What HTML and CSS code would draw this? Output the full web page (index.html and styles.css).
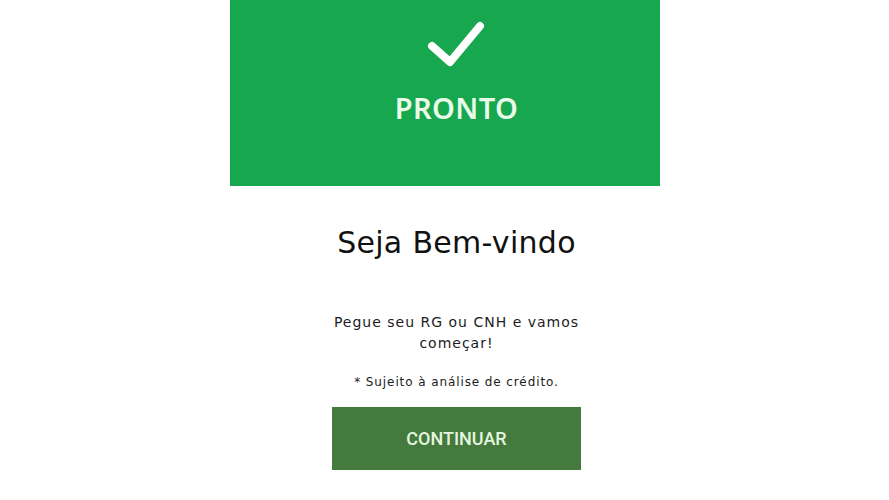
FILE: index.html
```html
<!DOCTYPE html>
<html lang="pt-BR">
<head>
<meta charset="utf-8">
<link rel="stylesheet" href="styles.css">
</head>
<body>
<div class="page">
  <div class="banner">
    <svg class="check" width="60" height="52" viewBox="0 0 60 52">
      <path d="M5 28 L23 44 L53 8" fill="none" stroke="#fff" stroke-width="8" stroke-linecap="round" stroke-linejoin="round"/>
    </svg>
    <div class="status">PRONTO</div>
  </div>
  <div class="content">
    <h1 class="title">Seja Bem-vindo</h1>
    <p class="lead">Pegue seu RG ou CNH e vamos começar!</p>
    <p class="note">* Sujeito à análise de crédito.</p>
    <button class="btn">CONTINUAR</button>
  </div>
</div>
</body>
</html>
```
FILE: styles.css
```css
html, body {
  margin: 0;
  padding: 0;
  background: #fff;
}
.page {
  width: 430px;
  margin: 0 auto;
  font-family: "DejaVu Sans", Verdana, sans-serif;
}
.banner {
  height: 186px;
  background: #17a74e;
  display: flex;
  flex-direction: column;
  align-items: center;
  box-sizing: border-box;
  padding: 18px 0 0 24px;
}
.check {
  display: block;
}
.status {
  margin-top: 20px;
  font-family: "Noto Sans", "Open Sans", sans-serif;
  font-weight: 600;
  font-size: 29px;
  line-height: 36px;
  color: #eafbe9;
  letter-spacing: 0.4px;
}
.content {
  width: 250px;
  margin: 0 0 0 102px;
  display: flex;
  flex-direction: column;
  align-items: center;
  text-align: center;
}
.title {
  margin: 39px 0 0;
  font-weight: normal;
  font-size: 30px;
  line-height: 36px;
  color: #111;
  white-space: nowrap;
  letter-spacing: 0.3px;
}
.lead {
  margin: 51px 0 0;
  font-size: 14px;
  line-height: 21px;
  color: #1c1c1c;
  letter-spacing: 1px;
}
.note {
  margin: 20px 0 0;
  font-size: 12px;
  line-height: 16px;
  color: #1c1c1c;
  letter-spacing: 0.9px;
}
.btn {
  margin-top: 17px;
  width: 249px;
  height: 63px;
  border: none;
  background: #457a3f;
  color: #e4f7de;
  font-family: Roboto, "Liberation Sans", sans-serif;
  font-weight: 500;
  font-size: 18px;
  padding: 0;
}
```
